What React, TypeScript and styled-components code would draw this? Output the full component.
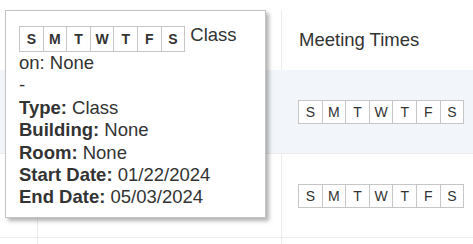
import styled, { createGlobalStyle } from "styled-components";

const GlobalStyle = createGlobalStyle`
	html, body {
		margin: 0;
		padding: 0;
		background: #fff;
		font-family: "Liberation Sans", Arial, sans-serif;
		color: #333;
	}
`;

const DAYS = ["S", "M", "T", "W", "T", "F", "S"];

const Days = ({ bold }: { bold?: boolean }) => (
	<DayGrid $bold={bold}>
		{DAYS.map((d, i) => (
			<DayCell key={i} $bold={bold}>
				{d}
			</DayCell>
		))}
	</DayGrid>
);

const App = () => {
	return (
		<Page>
			<GlobalStyle />
			<Table>
				<HeaderRow>
					<Cell />
					<Cell $divider />
					<HeaderCell>Meeting Times</HeaderCell>
				</HeaderRow>
				<Row $shaded>
					<Cell />
					<Cell />
					<DaysCell>
						<Days />
					</DaysCell>
				</Row>
				<Row>
					<Cell $divider />
					<Cell $divider />
					<DaysCell>
						<Days />
					</DaysCell>
				</Row>
				<Row $short>
					<Cell $divider />
					<Cell $divider />
					<Cell />
				</Row>
			</Table>

			<Popup>
				<Days bold /> Class on: None
				<br />-
				<br />
				<b>Type:</b> Class
				<br />
				<b>Building:</b> None
				<br />
				<b>Room:</b> None
				<br />
				<b>Start Date:</b> 01/22/2024
				<br />
				<b>End Date:</b> 05/03/2024
			</Popup>
		</Page>
	);
};

export default App;

const Page = styled.div`
	position: relative;
	width: 473px;
	height: 244px;
	overflow: hidden;
`;

const Table = styled.div`
	display: grid;
	grid-template-columns: 38px 244px 1fr;
`;

const HeaderRow = styled.div`
	display: contents;
	& > div {
		height: 70px;
		box-sizing: border-box;
	}
	& > div:nth-child(2) {
		border-right: none;
		background: linear-gradient(#ececec, #ececec) right 10px / 1px 60px no-repeat;
	}
`;

const Row = styled.div<{ $shaded?: boolean; $short?: boolean }>`
	display: contents;
	& > div {
		height: ${(p) => (p.$short ? "20px" : "84px")};
		background: ${(p) => (p.$shaded ? "#f2f6fa" : "#fff")};
		border-bottom: ${(p) => (p.$short ? "none" : "1px solid #ececec")};
		box-sizing: border-box;
	}
`;

const Cell = styled.div<{ $divider?: boolean }>`
	box-sizing: border-box;
	border-right: ${(p) => (p.$divider ? "1px solid #ececec" : "none")};
`;

const HeaderCell = styled.div`
	padding: 29px 0 0 17px;
	font-size: 18.5px;
	line-height: 22px;
	color: #333;
`;

const DaysCell = styled.div`
	display: flex;
	align-items: center;
	padding-left: 16px;
`;

const DayGrid = styled.span<{ $bold?: boolean }>`
	display: inline-flex;
	vertical-align: ${(p) => (p.$bold ? "-3px" : "middle")};
	border: 1px solid #c6c6c6;
	background: #fff;
	line-height: normal;
`;

const DayCell = styled.span<{ $bold?: boolean }>`
	display: flex;
	align-items: center;
	justify-content: center;
	width: 22.6px;
	height: ${(p) => (p.$bold ? "24px" : "22px")};
	font-size: 14px;
	font-weight: ${(p) => (p.$bold ? 700 : 400)};
	color: #333;
	& + & {
		border-left: 1px solid #c6c6c6;
	}
`;

const Popup = styled.div`
	position: absolute;
	left: 5px;
	top: 10px;
	width: 261px;
	height: 208px;
	box-sizing: border-box;
	padding: 13px 10px 0 13px;
	background: #fff;
	border: 1px solid #c4c4c4;
	box-shadow: 3px 3px 4px rgba(0, 0, 0, 0.3);
	font-size: 18.5px;
	line-height: 22.4px;
	color: #333;
`;
